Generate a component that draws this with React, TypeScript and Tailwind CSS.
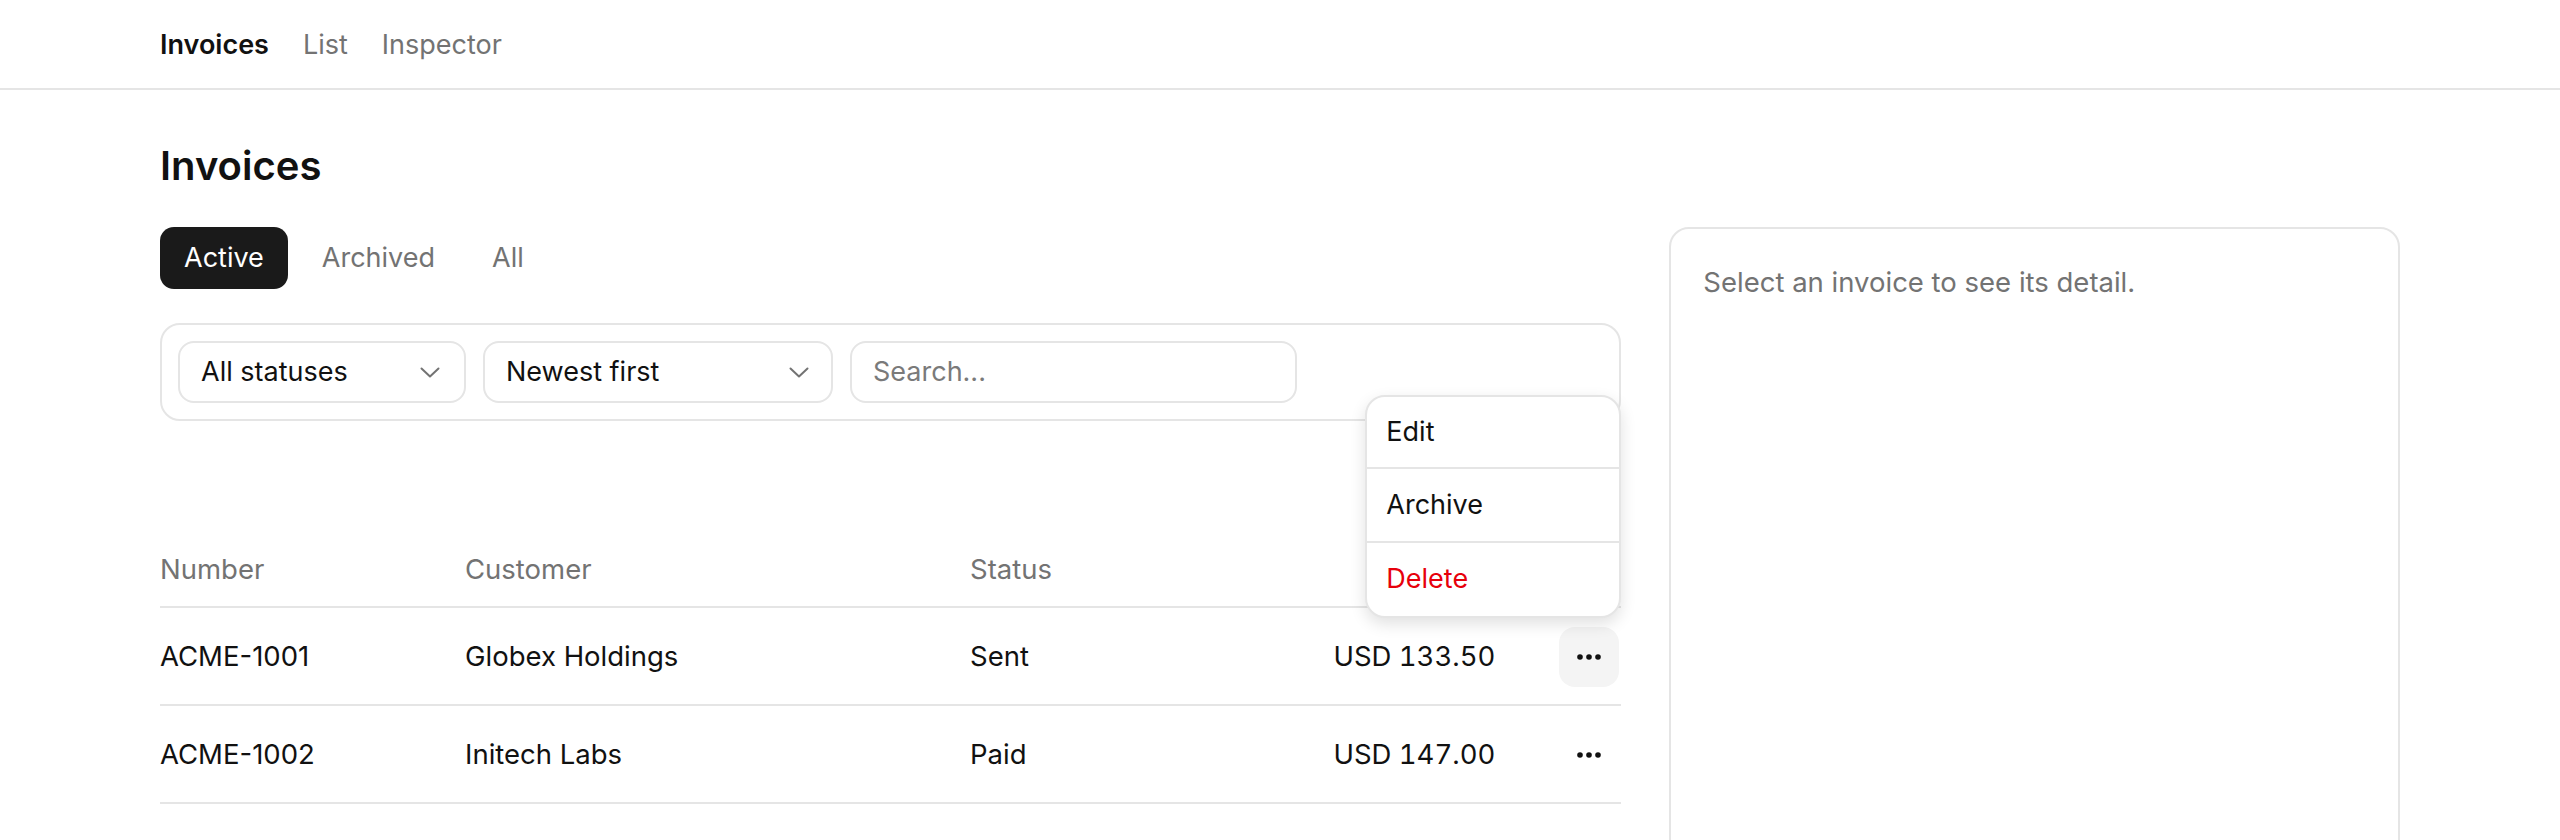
import React from "react";

function Chevron() {
  return (
    <svg width="20" height="11" viewBox="0 0 20 11" fill="none" className="shrink-0">
      <path d="M1.5 1.5 10 9.5l8.5-8" stroke="#737373" strokeWidth="2" strokeLinecap="round" strokeLinejoin="round" />
    </svg>
  );
}

function Dots() {
  return (
    <svg width="26" height="8" viewBox="0 0 26 8" fill="#111111">
      <circle cx="4" cy="4" r="2.8" />
      <circle cx="13" cy="4" r="2.8" />
      <circle cx="22" cy="4" r="2.8" />
    </svg>
  );
}

const rows = [
  { number: "ACME-1001", customer: "Globex Holdings", status: "Sent", amount: "USD 133.50", open: true },
  { number: "ACME-1002", customer: "Initech Labs", status: "Paid", amount: "USD 147.00", open: false },
];

export default function App() {
  return (
    <div className="min-h-screen bg-white font-['Inter','Noto_Sans',sans-serif] text-[#111111]">
      <header className="h-[90px] border-b-2 border-[#e5e5e5]">
        <nav className="mx-auto flex h-full w-[2240px] items-center gap-[34px] pt-[2px] text-[27px]">
          <span className="font-semibold text-[#111111]">Invoices</span>
          <span className="text-[#737373]">List</span>
          <span className="text-[#737373]">Inspector</span>
        </nav>
      </header>

      <main className="mx-auto w-[2240px] pt-[48px]">
        <h1 className="mb-[33px] text-[40px] font-semibold leading-[56px]">Invoices</h1>

        <div className="grid grid-cols-[2fr_1fr] gap-[48px]">
          <section>
            <div className="flex gap-[10px] text-[27px]">
              <button className="flex h-[62px] items-center rounded-[14px] bg-[#1a1a1a] px-[24px] text-white">Active</button>
              <button className="flex h-[62px] items-center rounded-[14px] px-[24px] text-[#737373]">Archived</button>
              <button className="flex h-[62px] items-center rounded-[14px] px-[23px] text-[#737373]">All</button>
            </div>

            <div className="mt-[34px] flex gap-[17px] rounded-[20px] border-2 border-[#e5e5e5] p-[16px] text-[27px]">
              <div className="flex h-[62px] w-[288px] items-center justify-between rounded-[16px] border-2 border-[#e5e5e5] pl-[21px] pr-[24px]">
                <span>All statuses</span>
                <Chevron />
              </div>
              <div className="flex h-[62px] w-[350px] items-center justify-between rounded-[16px] border-2 border-[#e5e5e5] pl-[21px] pr-[22px]">
                <span>Newest first</span>
                <Chevron />
              </div>
              <div className="flex h-[62px] w-[447px] items-center rounded-[16px] border-2 border-[#e5e5e5] px-[21px]">
                <span className="text-[#7a7a7a]">Search...</span>
              </div>
            </div>

            <div className="relative mt-[113px] text-[27.5px]">
              <div className="flex h-[74px] items-center border-b-2 border-[#e5e5e5] text-[#737373]">
                <div className="w-[305px]">Number</div>
                <div className="w-[505px]">Customer</div>
                <div className="flex-1">Status</div>
                <div className="w-[126px]" />
              </div>
              {rows.map((r) => (
                <div key={r.number} className="flex h-[98px] items-center border-b-2 border-[#e5e5e5] pt-[1px]">
                  <div className="w-[305px]">{r.number}</div>
                  <div className="w-[505px]">{r.customer}</div>
                  <div className="flex-1">{r.status}</div>
                  <div className="w-[200px] text-right tabular-nums">{r.amount}</div>
                  <div className="flex w-[126px] justify-end pr-[2px]">
                    <button
                      className={
                        r.open
                          ? "flex h-[60px] w-[60px] items-center justify-center rounded-[16px] bg-[#f4f4f4]"
                          : "flex h-[60px] w-[60px] items-center justify-center rounded-[16px]"
                      }
                    >
                      <Dots />
                    </button>
                  </div>
                </div>
              ))}

              <div className="absolute right-0 top-[-139px] w-[256px] divide-y-2 divide-[#e5e5e5] overflow-hidden rounded-[20px] border-2 border-[#e5e5e5] bg-white text-[27px] shadow-[0_6px_16px_rgba(0,0,0,0.12)]">
                <div className="flex h-[72px] items-center px-[19px]">Edit</div>
                <div className="flex h-[74px] items-center px-[19px]">Archive</div>
                <div className="flex h-[73px] items-center px-[19px] text-[#e7000b]">Delete</div>
              </div>
            </div>
          </section>

          <aside className="h-[800px] rounded-[20px] border-2 border-[#e5e5e5] px-[32px] pt-[32px]">
            <p className="text-[27.5px] leading-[42px] text-[#737373]">Select an invoice to see its detail.</p>
          </aside>
        </div>
      </main>
    </div>
  );
}
